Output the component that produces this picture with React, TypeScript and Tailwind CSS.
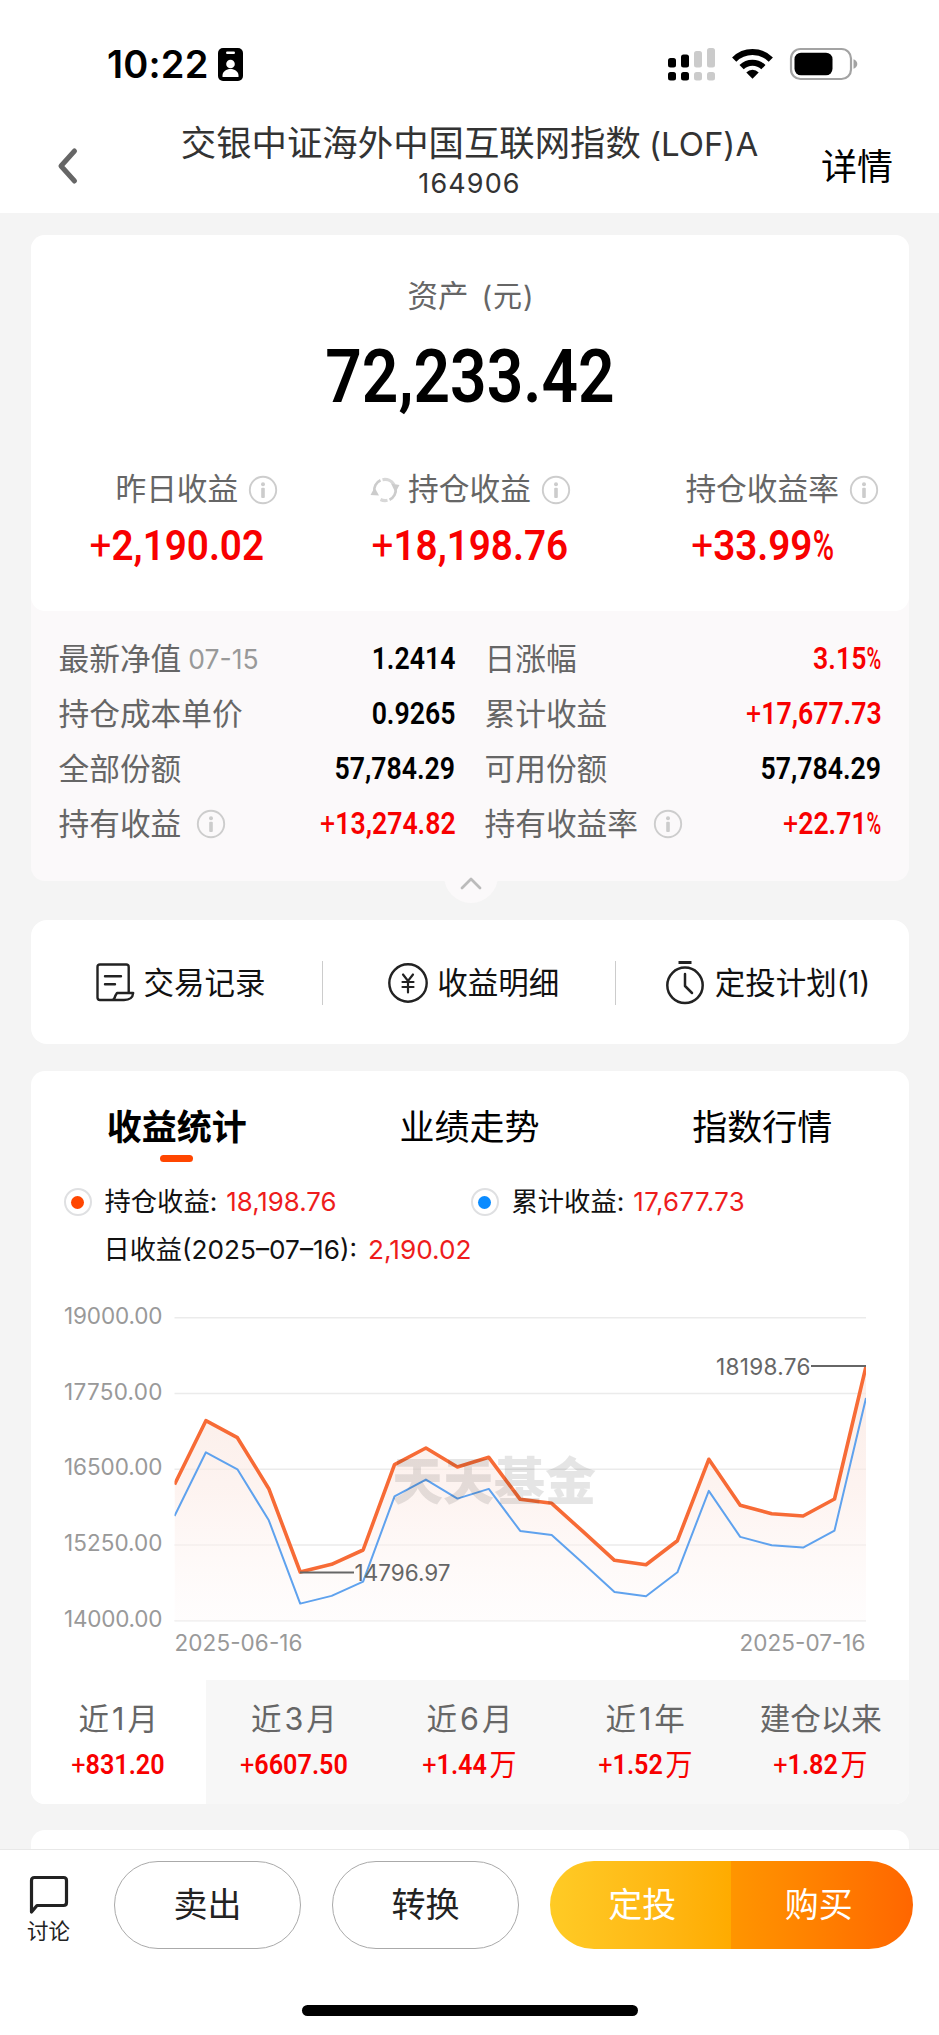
import React from 'react';

const CJK = "font-['Inter','Noto_Sans_CJK_SC',sans-serif]";
const NUM = "font-['Roboto','Noto_Sans_CJK_SC',sans-serif] font-semibold whitespace-nowrap";

function Digits({ value }: { value: string }) {
  const plus = value.startsWith('+');
  const percent = value.endsWith('%');
  const body = value.replace(/[+%]/g, '');
  return (
    <>
      {plus && <span className="font-normal">+</span>}
      {body}
      {percent && <span className="mr-[-0.18em] inline-block origin-left scale-x-[.75] font-medium">%</span>}
    </>
  );
}

function InfoIcon() {
  return (
    <svg width="30" height="30" viewBox="0 0 30 30" fill="none" className="block shrink-0">
      <circle cx="15" cy="15" r="13.2" stroke="#cdcdcd" strokeWidth="1.9" />
      <circle cx="15" cy="9.2" r="2" fill="#ccc" />
      <rect x="13.2" y="12.7" width="3.6" height="10.3" rx="1" fill="#ccc" />
    </svg>
  );
}

function RefreshIcon() {
  return (
    <svg width="30" height="30" viewBox="0 0 30 30" fill="none" className="block">
      <path d="M4.400 17A10.800 10.800 0 0 1 10.500 5.200" stroke="#ccc" strokeWidth="2.600" />
      <path d="M12.500 4.700A10.800 10.800 0 0 1 24 9.500" stroke="#d8d8d8" strokeWidth="3.200" />
      <path d="M25.600 13A10.800 10.800 0 0 1 19.500 24.800" stroke="#ccc" strokeWidth="2.600" />
      <path d="M17.500 25.300A10.800 10.800 0 0 1 10.500 24.500" stroke="#d8d8d8" strokeWidth="3.200" />
      <path d="M0.500 20L4.600 12.500L9 20.500Z" fill="#ccc" />
      <path d="M29.500 10L25.400 17.500L21 8.500Z" fill="#ccc" />
    </svg>
  );
}

function StatusBar() {
  return (
    <div className="flex h-[126px] shrink-0 items-center pt-[2px] pr-[81px] pl-[107px]">
      <span className="text-[38px] leading-none font-semibold tracking-[0.2px] text-black">10:22</span>
      <svg width="25" height="33" viewBox="0 0 25 33" className="ml-[9px] block">
        <rect width="25" height="33" rx="5" fill="#000" />
        <rect x="8" y="3.6" width="9" height="2.4" rx="1.2" fill="#fff" />
        <circle cx="12.5" cy="16" r="4.3" fill="#fff" />
        <path d="M4.5 29V27.5C4.5 23.5 8.5 21 12.5 21S20.5 23.5 20.5 27.5V29Z" fill="#fff" />
      </svg>
      <svg width="192" height="36" viewBox="665 45 192 36" className="ml-auto block">
        <g fill="#000">
          <rect x="667" y="57" width="8" height="9.5" rx="2.5" />
          <rect x="680" y="53.5" width="8" height="13" rx="2.5" />
          <rect x="667" y="71" width="8" height="8.5" rx="2.5" />
          <rect x="680" y="71" width="8" height="8.5" rx="2.5" />
        </g>
        <g fill="#cbcbcb">
          <rect x="693" y="50" width="8" height="16.5" rx="2.5" />
          <rect x="706" y="47" width="8" height="19.5" rx="2.5" />
          <rect x="693" y="71" width="8" height="8.5" rx="2.5" />
          <rect x="706" y="71" width="8" height="8.5" rx="2.5" />
        </g>
        <g fill="none" stroke="#000" strokeWidth="6">
          <path d="M733.2 58.6A26 26 0 0 1 769.8 58.6" />
          <path d="M740.6 66.2A15.6 15.6 0 0 1 762.4 66.2" />
        </g>
        <path d="M751.5 77.8L745.3 71.4A8.8 8.8 0 0 1 757.7 71.4Z" fill="#000" />
        <rect x="790" y="48" width="60" height="30" rx="9.5" fill="none" stroke="#a3a3a3" strokeWidth="2.2" />
        <rect x="793.5" y="51.7" width="38" height="22.6" rx="6.5" fill="#000" />
        <path d="M852.5 58.2C855 59 856.3 61 856.3 63S855 67 852.5 67.8Z" fill="#a3a3a3" />
      </svg>
    </div>
  );
}

function Header() {
  return (
    <div className="grid h-[87px] shrink-0 grid-cols-[140px_1fr_140px]">
      <svg width="24" height="40" viewBox="0 0 24 40" fill="none" className="mt-[20px] ml-[56px] block">
        <path d="M18.5 5L5 20L18.5 35" stroke="#666" strokeWidth="5" strokeLinecap="round" strokeLinejoin="round" />
      </svg>
      <div className="flex flex-col items-center text-[#333]">
        <div className="h-[36px] text-[35.4px] leading-[36px] whitespace-nowrap">
          交银中证海外中国互联网指数<span className="ml-[8px] text-[33px]">(LOF)A</span>
        </div>
        <div className="mt-[8px] text-[27px] leading-[28px] tracking-[1.1px]">164906</div>
      </div>
      <div className="mt-[23px] pr-[46px] text-right text-[36px] leading-[36px] text-black">详情</div>
    </div>
  );
}

function Stat({ label, value, refresh }: { label: string; value: string; refresh?: boolean }) {
  return (
    <div className="flex flex-col items-center">
      <div className="relative text-[30.7px] leading-[40px] text-[#666]">
        {label}
        {refresh && (
          <span className="absolute top-[6px] right-full mr-[8px]">
            <RefreshIcon />
          </span>
        )}
        <span className="absolute top-[6px] left-full ml-[10px]">
          <InfoIcon />
        </span>
      </div>
      <div className={`${NUM} mt-[13px] scale-x-[.92] text-[42px] leading-[48px] text-[#f80000]`}>
        <Digits value={value} />
      </div>
    </div>
  );
}

type Detail = { label: string; note?: string; info?: boolean; value: string; red?: boolean };

const leftDetails: Detail[] = [
  { label: '最新净值', note: '07-15', value: '1.2414' },
  { label: '持仓成本单价', value: '0.9265' },
  { label: '全部份额', value: '57,784.29' },
  { label: '持有收益', info: true, value: '+13,274.82', red: true },
];

const rightDetails: Detail[] = [
  { label: '日涨幅', value: '3.15%', red: true },
  { label: '累计收益', value: '+17,677.73', red: true },
  { label: '可用份额', value: '57,784.29' },
  { label: '持有收益率', info: true, value: '+22.71%', red: true },
];

function DetailColumn({ items }: { items: Detail[] }) {
  return (
    <div className="flex flex-col">
      {items.map((d) => (
        <div key={d.label} className="flex h-[54.8px] items-center">
          <span className="text-[30.7px] leading-[40px] text-[#666]">{d.label}</span>
          {d.note && <span className="ml-[7px] text-[26.5px] text-[#999]">{d.note}</span>}
          {d.info && (
            <span className="ml-[15px]">
              <InfoIcon />
            </span>
          )}
          <span className={`${NUM} ml-auto origin-right scale-x-[.86] text-[31px] ${d.red ? 'text-[#f80000]' : 'text-black'}`}>
            <Digits value={d.value} />
          </span>
        </div>
      ))}
    </div>
  );
}

function AssetCard() {
  return (
    <section className="relative h-[646px] shrink-0 rounded-[14px] bg-[#fbf9fa]">
      <div className="flex h-[376px] flex-col rounded-[14px] bg-white pt-[41px]">
        <div className="pl-[3px] text-center text-[30.5px] leading-[40px] text-[#666]">
          资产<span className="ml-[13px] text-[29px] tracking-[1px]">(元)</span>
        </div>
        <div className={`${NUM} mt-[20px] scale-x-[.86] text-center text-[74.5px] leading-[80px] text-black`}>72,233.42</div>
        <div className="mt-[52px] grid grid-cols-3">
          <Stat label="昨日收益" value="+2,190.02" />
          <Stat label="持仓收益" value="+18,198.76" refresh />
          <Stat label="持仓收益率" value="+33.99%" />
        </div>
      </div>
      <div className="grid grid-cols-[397px_397px] gap-x-[29px] pt-[21px] pl-[28px]">
        <DetailColumn items={leftDetails} />
        <DetailColumn items={rightDetails} />
      </div>
      <div className="absolute top-[614px] left-[413px] flex h-[54px] w-[54px] items-center justify-center rounded-full bg-[#fbf9fa]">
        <svg width="24" height="14" viewBox="0 0 24 14" fill="none" className="mt-[14px]">
          <path d="M3 12L12 3L21 12" stroke="#bbb" strokeWidth="2.8" strokeLinecap="round" strokeLinejoin="round" />
        </svg>
      </div>
    </section>
  );
}

function RecordIcon() {
  return (
    <svg width="40" height="42" viewBox="0 0 40 42" fill="none" stroke="#222" strokeWidth="2.400" strokeLinejoin="round" strokeLinecap="round">
      <path d="M33.700 30V5Q33.700 2.500 31.200 2.500H5Q2.500 2.500 2.500 5V35.500Q2.500 38 5 38H29Q37.500 38 38.200 31H22Q20.500 33 19.500 36Q18.800 38 16.500 38" />
      <path d="M10 14.200H26M10 22.200H20" />
    </svg>
  );
}

function YenIcon() {
  return (
    <svg width="42" height="42" viewBox="0 0 42 42" fill="none" stroke="#222" strokeWidth="2.400" strokeLinecap="round">
      <circle cx="21" cy="21" r="18.700" />
      <path d="M16 12.500L21 19L26 12.500M21 19V30.500M15.500 20H26.500M15.500 25H26.500" strokeWidth="2.200" />
    </svg>
  );
}

function ClockIcon() {
  return (
    <svg width="42" height="46" viewBox="0 0 42 46" fill="none" stroke="#222" strokeWidth="2.500">
      <circle cx="21" cy="25.300" r="17.700" />
      <path d="M14.500 2.500H27.500" strokeWidth="3" />
      <path d="M21 14V26L28 33" strokeLinecap="round" strokeLinejoin="round" />
    </svg>
  );
}

function Shortcuts() {
  const item = 'flex h-[44px] items-center text-[30.5px] leading-[44px] text-[#111]';
  return (
    <section className="mt-[39px] grid h-[124px] shrink-0 grid-cols-3 items-center rounded-[16px] bg-white pt-[2px]">
      <div className={`${item} border-r border-[#ccc] pl-[64px]`}>
        <RecordIcon />
        <span className="ml-[9px]">交易记录</span>
      </div>
      <div className={`${item} border-r border-[#ccc] pl-[64px]`}>
        <YenIcon />
        <span className="ml-[8px]">收益明细</span>
      </div>
      <div className={`${item} pl-[48px]`}>
        <ClockIcon />
        <span className="ml-[9px]">
          定投计划<span className="text-[29.5px]">(1)</span>
        </span>
      </div>
    </section>
  );
}

const tabs = ['收益统计', '业绩走势', '指数行情'];

function LegendDot({ blue }: { blue?: boolean }) {
  return (
    <span className="flex h-[28px] w-[28px] shrink-0 items-center justify-center rounded-full border-2 border-[#dfe0e2]">
      <span className={`h-[13px] w-[13px] rounded-full ${blue ? 'bg-[#0a8bff]' : 'bg-[#ff4600]'}`} />
    </span>
  );
}

const series = [
  1484.5, 1420.7, 1437.7, 1488.7, 1572, 1564.3, 1550, 1464.7, 1448, 1467, 1457.3, 1499.3, 1503.3, 1531.7, 1560.3, 1564.7, 1540.7, 1459.3, 1505.3,
  1513.7, 1516, 1499, 1366.5,
];
const px = (i: number) => 174.5 + i * 31.43;
const orange = series.map((y, i) => `${px(i).toFixed(1)},${y}`).join(' ');
const blue = series.map((y, i) => `${px(i).toFixed(1)},${(y + 31.6).toFixed(1)}`).join(' ');
const grid = [
  { y: 1317.7, label: '19000.00' },
  { y: 1393.5, label: '17750.00' },
  { y: 1469.2, label: '16500.00' },
  { y: 1545, label: '15250.00' },
  { y: 1620.7, label: '14000.00' },
];

function Chart() {
  return (
    <svg width="878" height="400" viewBox="31 1280 878 400" className="block" fontFamily="Inter, sans-serif" fontSize="22.500">
      <defs>
        <linearGradient id="area" x1="0" y1="1366" x2="0" y2="1621" gradientUnits="userSpaceOnUse">
          <stop offset="0" stopColor="#f9e4dc" stopOpacity="0.7" />
          <stop offset="0.5" stopColor="#fcece7" stopOpacity="0.6" />
          <stop offset="1" stopColor="#fefafa" stopOpacity="0.4" />
        </linearGradient>
        <clipPath id="plot">
          <rect x="174.500" y="1300" width="691.500" height="330" />
        </clipPath>
      </defs>
      {grid.map((g) => (
        <g key={g.label}>
          <line x1="174.500" x2="866" y1={g.y} y2={g.y} stroke="#ebebeb" strokeWidth="1.500" />
          <text x="64" y={g.y + 6} fill="#999" textLength="98.500">
            {g.label}
          </text>
        </g>
      ))}
      <g clipPath="url(#plot)">
        <polygon points={`174.5,1621 ${orange} 866,1621`} fill="url(#area)" />
        <polyline points={orange} fill="none" stroke="#f76b36" strokeWidth="3.600" strokeLinejoin="round" />
        <polyline points={blue} fill="none" stroke="#5fa2ee" strokeWidth="2" strokeLinejoin="round" />
      </g>
      <text x="392" y="1500" fontFamily="'Noto Sans CJK SC', sans-serif" fontWeight="900" fontSize="51" textLength="204" fill="#000" fillOpacity="0.100">
        天天基金
      </text>
      <line x1="300" x2="354" y1="1572.500" y2="1572.500" stroke="#666" strokeWidth="2" />
      <text x="354.500" y="1580.500" fill="#666" textLength="96">
        14796.97
      </text>
      <line x1="811" x2="866" y1="1366" y2="1366" stroke="#666" strokeWidth="2" />
      <text x="716" y="1374.500" fill="#666" textLength="94.500">
        18198.76
      </text>
      <text x="174.500" y="1650.500" fill="#999" textLength="128">
        2025-06-16
      </text>
      <text x="739.500" y="1650.500" fill="#999" textLength="126">
        2025-07-16
      </text>
    </svg>
  );
}

const periods = [
  { label: ['近', '1', '月'], value: '+831.20', unit: '' },
  { label: ['近', '3', '月'], value: '+6607.50', unit: '' },
  { label: ['近', '6', '月'], value: '+1.44', unit: '万' },
  { label: ['近', '1', '年'], value: '+1.52', unit: '万' },
  { label: ['建仓以来'], value: '+1.82', unit: '万' },
];

function StatsCard() {
  return (
    <section className="mt-[27px] flex h-[733px] shrink-0 flex-col overflow-hidden rounded-[14px] bg-white">
      <div className="grid h-[92px] grid-cols-3 pt-[34px]">
        {tabs.map((t, i) => (
          <div key={t} className={`flex flex-col items-center text-[35px] leading-[44px] text-black ${i === 0 ? 'font-bold' : ''}`}>
            {t}
            {i === 0 && <span className="mt-[6px] h-[7px] w-[33px] shrink-0 rounded-full bg-[#ff4600]" />}
          </div>
        ))}
      </div>
      <div className="mt-[20px] grid h-[38px] grid-cols-[407px_1fr] pl-[33px] text-[26.3px] leading-[38px] text-[#111]">
        <div className="flex items-center">
          <LegendDot />
          <span className="ml-[13px]">持仓收益:</span>
          <span className="ml-[9px] text-[25.8px] text-[#ee1c1c]">18,198.76</span>
        </div>
        <div className="flex items-center">
          <LegendDot blue />
          <span className="ml-[13px]">累计收益:</span>
          <span className="ml-[9px] text-[25.8px] tracking-[0.4px] text-[#ee1c1c]">17,677.73</span>
        </div>
      </div>
      <div className="mt-[10px] flex h-[38px] items-center pl-[73px] text-[26.2px] leading-[38px] text-[#111]">
        日收益(2025–07–16):<span className="ml-[11px] text-[#ee1c1c]">2,190.02</span>
      </div>
      <div className="mt-[11px] h-[400px]">
        <Chart />
      </div>
      <div className="grid h-[124px] grid-cols-5">
        {periods.map((p, i) => (
          <div key={p.value} className={`flex flex-col items-center pt-[19px] ${i === 0 ? 'bg-white' : 'bg-[#f7f7f7]'}`}>
            <div className="flex gap-[3px] text-[30.5px] leading-[40px] text-[#666]">
              {p.label.map((part) => (
                <span key={part}>{part}</span>
              ))}
            </div>
            <div className={`${NUM} mt-[9px] flex h-[34px] scale-x-[.9] items-center text-[28px] leading-[34px] text-[#f80000]`}>
              <span>
                <Digits value={p.value} />
              </span>
              {p.unit && <span className="ml-[3px] text-[30px] font-normal">{p.unit}</span>}
            </div>
          </div>
        ))}
      </div>
    </section>
  );
}

function Footer() {
  const pill = 'flex h-[88px] w-[187px] items-center justify-center rounded-full border-[1.5px] border-[#aaa]';
  return (
    <footer className="h-[186px] shrink-0 border-t border-[#e8e8e8] bg-white">
      <div className="flex pt-[11px] text-[34px] leading-[44px] text-[#222]">
        <div className="flex w-[97px] flex-col items-center pt-[14px]">
          <svg width="40" height="40" viewBox="0 0 40 40" fill="none" className="block">
            <path d="M2.500 37V5.500Q2.500 2.500 5.500 2.500H34.500Q37.500 2.500 37.500 5.500V27.500Q37.500 30.500 34.500 30.500H8Z" stroke="#222" strokeWidth="3.200" strokeLinejoin="round" />
          </svg>
          <span className="mt-[2px] text-[21.5px] leading-[28px]">讨论</span>
        </div>
        <div className={`${pill} ml-[17px]`}>卖出</div>
        <div className={`${pill} ml-[31px]`}>转换</div>
        <div className="ml-[31px] flex h-[88px] w-[363px] overflow-hidden rounded-full text-white">
          <div className="flex flex-1 items-center justify-center bg-linear-to-r from-[#ffcb25] to-[#ffab00] pl-[4px]">定投</div>
          <div className="flex flex-1 items-center justify-center bg-linear-to-r from-[#ff9500] to-[#ff6600] pr-[6px]">购买</div>
        </div>
      </div>
      <div className="mx-auto mt-[56px] h-[11px] w-[336px] rounded-full bg-black" />
    </footer>
  );
}

export default function App() {
  return (
    <div className={`${CJK} flex h-[2035px] w-[939px] flex-col overflow-hidden bg-white`}>
      <StatusBar />
      <Header />
      <main className="flex h-[1636px] shrink-0 flex-col overflow-hidden bg-[#f4f4f4] px-[30.5px] pt-[22px]">
        <AssetCard />
        <Shortcuts />
        <StatsCard />
        <section className="mt-[26px] h-[60px] shrink-0 rounded-[14px] bg-white" />
      </main>
      <Footer />
    </div>
  );
}
